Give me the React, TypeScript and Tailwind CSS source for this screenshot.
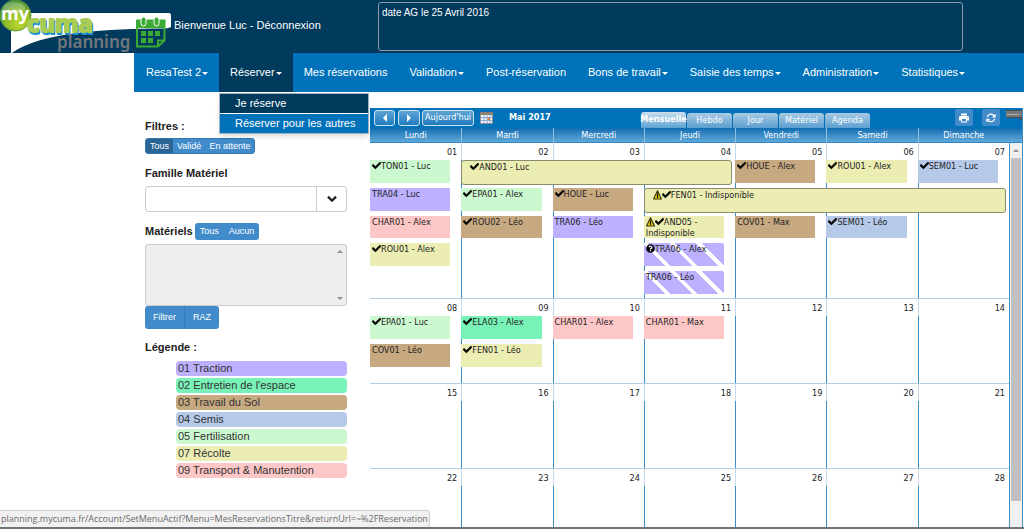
import { clsx } from "clsx";
import { FaCheck, FaQuestionCircle, FaChevronDown } from "react-icons/fa";
import { FaArrowsRotate } from "react-icons/fa6";
import { MdPrint } from "react-icons/md";

type Kind = "traction" | "entretien" | "sol" | "semis" | "fertilisation" | "recolte" | "transport";

type Booking = {
  label: string;
  kind: Kind;
  col: number;
  row: number;
  span?: number;
  checked?: boolean;
  warning?: boolean;
  pending?: boolean;
  question?: boolean;
};

type Week = {
  days: string[];
  className: string;
  bookings: Booking[];
};

const kindColors: Record<Kind, string> = {
  traction: "bg-[#bcb0ff]",
  entretien: "bg-[#79f2b7]",
  sol: "bg-[#c7a981]",
  semis: "bg-[#b6c9e9]",
  fertilisation: "bg-[#ccf8d0]",
  recolte: "bg-[#ebedb3]",
  transport: "bg-[#fec7c7]",
};

const colStarts = ["", "col-start-1", "col-start-2", "col-start-3", "col-start-4", "col-start-5", "col-start-6", "col-start-7"];
const rowStarts = ["", "row-start-2", "row-start-3", "row-start-4", "row-start-5", "row-start-6"];
const colSpans = ["", "", "", "col-span-3", "col-span-4"];

const menu = [
  { label: "ResaTest 2", caret: true },
  { label: "Réserver", caret: true, open: true },
  { label: "Mes réservations" },
  { label: "Validation", caret: true },
  { label: "Post-réservation" },
  { label: "Bons de travail", caret: true },
  { label: "Saisie des temps", caret: true },
  { label: "Administration", caret: true },
  { label: "Statistiques", caret: true },
];

const legend: { label: string; kind: Kind }[] = [
  { label: "01 Traction", kind: "traction" },
  { label: "02 Entretien de l'espace", kind: "entretien" },
  { label: "03 Travail du Sol", kind: "sol" },
  { label: "04 Semis", kind: "semis" },
  { label: "05 Fertilisation", kind: "fertilisation" },
  { label: "07 Récolte", kind: "recolte" },
  { label: "09 Transport & Manutention", kind: "transport" },
];

const weekdays = ["Lundi", "Mardi", "Mercredi", "Jeudi", "Vendredi", "Samedi", "Dimanche"];
const views = ["Mensuelle", "Hebdo", "Jour", "Matériel", "Agenda"];

const weeks: Week[] = [
  {
    days: ["01", "02", "03", "04", "05", "06", "07"],
    className: "h-[156px] grid-rows-[17px_repeat(5,minmax(0,1fr))]",
    bookings: [
      { label: "TON01 - Luc", kind: "fertilisation", col: 1, row: 1, checked: true },
      { label: "TRA04 - Luc", kind: "traction", col: 1, row: 2 },
      { label: "CHAR01 - Alex", kind: "transport", col: 1, row: 3 },
      { label: "ROU01 - Alex", kind: "recolte", col: 1, row: 4, checked: true },
      { label: "AND01 - Luc", kind: "recolte", col: 2, row: 1, span: 3, checked: true },
      { label: "EPA01 - Alex", kind: "fertilisation", col: 2, row: 2, checked: true },
      { label: "ROU02 - Léo", kind: "sol", col: 2, row: 3, checked: true },
      { label: "HOUE - Luc", kind: "sol", col: 3, row: 2, checked: true },
      { label: "TRA06 - Léo", kind: "traction", col: 3, row: 3 },
      { label: "FEN01 - Indisponible", kind: "recolte", col: 4, row: 2, span: 4, checked: true, warning: true },
      { label: "AND05 - Indisponible", kind: "recolte", col: 4, row: 3, checked: true, warning: true },
      { label: "TRA06 - Alex", kind: "traction", col: 4, row: 4, pending: true, question: true },
      { label: "TRA06 - Léo", kind: "traction", col: 4, row: 5, pending: true },
      { label: "HOUE - Alex", kind: "sol", col: 5, row: 1, checked: true },
      { label: "COV01 - Max", kind: "sol", col: 5, row: 3 },
      { label: "ROU01 - Alex", kind: "recolte", col: 6, row: 1, checked: true },
      { label: "SEM01 - Léo", kind: "semis", col: 6, row: 3, checked: true },
      { label: "SEM01 - Luc", kind: "semis", col: 7, row: 1, checked: true },
    ],
  },
  {
    days: ["08", "09", "10", "11", "12", "13", "14"],
    className: "h-[85px] grid-rows-[17px_28px_28px_minmax(0,1fr)]",
    bookings: [
      { label: "EPA01 - Luc", kind: "fertilisation", col: 1, row: 1, checked: true },
      { label: "COV01 - Léo", kind: "sol", col: 1, row: 2 },
      { label: "ELA03 - Alex", kind: "entretien", col: 2, row: 1, checked: true },
      { label: "FEN01 - Léo", kind: "recolte", col: 2, row: 2, checked: true },
      { label: "CHAR01 - Alex", kind: "transport", col: 3, row: 1 },
      { label: "CHAR01 - Max", kind: "transport", col: 4, row: 1 },
    ],
  },
  {
    days: ["15", "16", "17", "18", "19", "20", "21"],
    className: "h-[85px]",
    bookings: [],
  },
  {
    days: ["22", "23", "24", "25", "26", "27", "28"],
    className: "h-[85px]",
    bookings: [],
  },
];

function Logo() {
  return (
    <svg className="h-[53px] w-[172px] shrink-0" viewBox="0 0 172 53" aria-label="my cuma planning" role="img">
      <defs>
        <radialGradient id="ball" cx="0.6" cy="0.75" r="0.75">
          <stop offset="0" stopColor="#c3d92e" />
          <stop offset="0.55" stopColor="#8fbb2c" />
          <stop offset="1" stopColor="#3d8a3a" />
        </radialGradient>
      </defs>
      <path d="M11 13H169Q171 13 171 16V27Q168 28.500 164 28.500C110 28.500 40 32 12 53H11Z" fill="#fff" />
      <circle cx="15.500" cy="15.500" r="15.500" fill="url(#ball)" stroke="#5b9a3e" />
      <ellipse cx="14" cy="8" rx="11" ry="6" fill="#fff" opacity="0.25" />
      <text x="1" y="20" fontFamily="Open Sans, sans-serif" fontWeight="700" fontSize="18" fill="#fff">my</text>
      <text
        x="27"
        y="32"
        className="drop-shadow-[1px_2px_0_#1f8fd0]"
        fontFamily="Noto Sans, sans-serif"
        fontWeight="700"
        fontSize="24"
        fill="#a9cd54"
        stroke="#a9cd54"
        strokeWidth="2"
        strokeLinejoin="round"
      >
        cuma
      </text>
      <text x="57" y="48" fontFamily="Noto Sans, sans-serif" fontWeight="600" fontSize="17" fill="#73777c">planning</text>
      <g fill="none" stroke="#3aaa35" strokeWidth="2">
        <path d="M137 20.500H164.500V40.500L158 46.500H137Z" />
        <path d="M158 46V40.500H164" />
      </g>
      <path d="M136 20H165V28H136Z" fill="#3aaa35" />
      <g fill="#3aaa35" stroke="#fff" strokeWidth="1">
        <rect x="141" y="17" width="5" height="9" rx="2.500" />
        <rect x="154" y="17" width="5" height="9" rx="2.500" />
      </g>
      <g fill="#3aaa35">
        <rect x="141" y="31" width="5" height="5" />
        <rect x="148" y="31" width="5" height="5" />
        <rect x="155" y="31" width="5" height="5" />
        <rect x="141" y="38" width="5" height="5" />
        <rect x="148" y="38" width="5" height="5" />
      </g>
    </svg>
  );
}

function Caret() {
  return <span className="mt-px ml-px border-x-3 border-t-3 border-x-transparent border-t-white" />;
}

function WarningIcon() {
  return (
    <svg className="inline h-[10px] w-[9px] align-top" viewBox="0 0 9 10">
      <path d="M4.500 0.800L8.400 9H0.600Z" fill="#f0d800" stroke="#3a3510" strokeWidth="1.200" strokeLinejoin="round" />
      <path d="M4.500 3.500V8" stroke="#111" strokeWidth="1.300" />
    </svg>
  );
}

function BookingCard({ booking }: { booking: Booking }) {
  const { label, kind, col, row, span, checked, warning, pending, question } = booking;
  return (
    <div
      className={clsx(
        "z-10 overflow-hidden pt-px text-[9px] leading-[11px]",
        kindColors[kind],
        colStarts[col],
        rowStarts[row],
        span ? "mr-[3px] mb-[3px] rounded-[3px] border border-[#8b8c6c] pl-2" : "mr-[11px] mb-[5px] pl-[2px]",
        span && colSpans[span],
        pending &&
          "bg-[repeating-linear-gradient(45deg,#bcb0ff_0px,#bcb0ff_15px,#ffffff_15px,#ffffff_19px)]"
      )}
    >
      {warning && <WarningIcon />}
      {checked && <FaCheck className="inline size-[9px] stroke-[30px] align-top text-black" />}
      {question && <FaQuestionCircle className="inline size-[9px] align-top text-black" />}
      {label}
    </div>
  );
}

function WeekRow({ week }: { week: Week }) {
  return (
    <div className={clsx("grid shrink-0 grid-cols-7", week.className)}>
      {week.days.map((day, i) => (
        <div key={day} className={clsx("row-start-1 -row-end-1 flex flex-col border-b border-[#b5cde0]", colStarts[i + 1])}>
          <div className={clsx("h-[17px] shrink-0 pt-[3px] pr-1 text-right text-[9px] leading-[12px]", i > 0 && "border-l border-[#c5d9e8]")}>
            {day}
          </div>
          <div className={clsx("grow", i > 0 && "border-l border-[#3b8fc6]")} />
        </div>
      ))}
      {week.bookings.map((b) => (
        <BookingCard key={`${b.col}-${b.row}`} booking={b} />
      ))}
    </div>
  );
}

function Header() {
  return (
    <header className="flex h-[53px] bg-[#003a5d] text-white">
      <Logo />
      <div className="flex h-[50px] w-[206px] shrink-0 items-center pl-[2px] whitespace-pre">
        Bienvenue Luc - <a href="#deconnexion">Déconnexion</a>
      </div>
      <textarea
        aria-label="Message"
        readOnly
        defaultValue="date AG le 25 Avril 2016"
        className="mt-[2px] mr-[61px] h-[49px] grow resize-none rounded-[3px] border border-[#8c9caa] px-[3px] py-[3px] text-[10px] leading-[14px]"
      />
    </header>
  );
}

function Menu() {
  return (
    <nav className="ml-[134px] flex h-[39px] bg-[#0072b9] pl-px text-white">
      {menu.map((item) => (
        <div key={item.label} className="relative">
          <a
            href="#menu"
            className={clsx("flex h-full items-center px-[11px] whitespace-nowrap", item.open && "bg-[#003a5d]")}
          >
            {item.label}
            {item.caret && <Caret />}
          </a>
          {item.open && (
            <ul className="absolute top-10 left-0 z-20 w-[150px] border border-[#9db5c6] bg-white whitespace-nowrap shadow-md">
              <li>
                <a href="#je-reserve" className="block bg-[#003a5d] pl-[15px] leading-[19px]">Je réserve</a>
              </li>
              <li className="mt-px">
                <a href="#reserver-autres" className="block bg-[#0072b9] pl-[15px] leading-[19px]">Réserver pour les autres</a>
              </li>
            </ul>
          )}
        </div>
      ))}
    </nav>
  );
}

function Sidebar() {
  return (
    <aside className="w-[202px] shrink-0 pt-[26px]">
      <h2 className="leading-4 font-bold">Filtres :</h2>
      <div className="mt-1 inline-flex overflow-hidden rounded-[3px] border border-[#3276b1] bg-[#428bca] text-[9px] leading-[14px] text-white">
        <button className="bg-[#2a6596] px-1">Tous</button>
        <button className="px-1">Validé</button>
        <button className="px-1">En attente</button>
      </div>

      <label htmlFor="famille" className="mt-[11px] block leading-4 font-bold">Famille Matériel</label>
      <div className="relative mt-[5px] h-[26px]">
        <select id="famille" className="size-full appearance-none rounded-[3px] border border-[#cccccc] bg-white px-2">
          <option></option>
        </select>
        <div className="pointer-events-none absolute inset-y-0 right-0 flex w-[31px] items-center justify-center border-l border-[#cccccc]">
          <FaChevronDown className="size-[10px] stroke-[50px]" />
        </div>
      </div>

      <div className="mt-[11px] flex items-center gap-[2px]">
        <label htmlFor="materiels" className="font-bold">Matériels</label>
        <div className="flex rounded-[3px] bg-[#428bca] text-[9px] leading-[17px] text-white">
          <button className="px-[5px]">Tous</button>
          <button className="px-[5px]">Aucun</button>
        </div>
      </div>
      <div className="relative mt-1 h-[62px]">
        <select id="materiels" multiple className="size-full overflow-hidden rounded-[3px] border border-[#cccccc] bg-[#eeeeee]" />
        <div className="pointer-events-none absolute inset-y-[6px] right-1 flex flex-col justify-between">
          <span className="border-x-3 border-b-3 border-x-transparent border-b-[#909090]" />
          <span className="border-x-3 border-t-3 border-x-transparent border-t-[#909090]" />
        </div>
      </div>
      <div className="flex w-fit overflow-hidden rounded-[3px] bg-[#428bca] text-[9px] leading-[23px] text-white">
        <button className="border-r border-[#357ebd] px-2">Filtrer</button>
        <button className="px-2">RAZ</button>
      </div>

      <h2 className="mt-[10px] leading-4 font-bold">Légende :</h2>
      <ul className="mt-[6px] ml-[31px] flex flex-col gap-[2px] text-[#333333]">
        {legend.map((item) => (
          <li key={item.kind} className={clsx("rounded-[4px] pl-[2px] leading-[15px]", kindColors[item.kind])}>
            {item.label}
          </li>
        ))}
      </ul>
    </aside>
  );
}

function Toolbar() {
  const navButton = "flex h-4 items-center justify-center rounded-[3px] border border-[#cfe2f1] bg-linear-to-b from-[#5fa5d5] to-[#1c7cc0]";
  return (
    <div className="flex h-5 items-start bg-[#0072b9] text-white">
      <div className="flex w-[271px] shrink-0 items-center pt-[2px] pl-1">
        <button aria-label="Précédent" className={clsx(navButton, "w-[21px]")}>
          <span className="border-y-4 border-r-4 border-y-transparent border-r-white" />
        </button>
        <button aria-label="Suivant" className={clsx(navButton, "ml-[3px] w-[22px]")}>
          <span className="border-y-4 border-l-4 border-y-transparent border-l-white" />
        </button>
        <button className={clsx(navButton, "ml-[2px] px-[2px]")}>Aujourd'hui</button>
        <svg className="ml-[6px] h-3 w-[13px]" viewBox="0 0 13 12">
          <path d="M0.500 0.500H12.500V11.500H0.500Z" fill="#f4f6fa" stroke="#8a8f98" />
          <path d="M0 0H13V3H0Z" fill="#8c8175" />
          <path d="M1 5.500H12M1 8.500H12M4 3V11M7 3V11M10 3V11" stroke="#7ba0d0" strokeWidth="0.800" />
          <path d="M7.500 6H10V8H7.500Z" fill="#e07b39" />
        </svg>
        <span className="ml-4 font-bold">Mai 2017</span>
      </div>
      <div className="flex gap-px self-end">
        {views.map((view, i) => (
          <button
            key={view}
            className={clsx(
              "w-[45px] self-end rounded-t-[3px] text-center",
              i === 0
                ? "flex h-4 items-center justify-center bg-linear-to-b from-[#cddfed] to-[#5ba3d3] font-bold whitespace-nowrap"
                : "h-[15px] bg-linear-to-b from-[#a9cae3] to-[#5a9fd0]"
            )}
          >
            {view}
          </button>
        ))}
      </div>
      <div className="ml-auto flex items-start pt-px">
        <button aria-label="Imprimer" className="mr-[9px] flex h-[17px] w-[18px] items-center justify-center rounded-[2px] bg-[#428bca]">
          <MdPrint className="size-3" />
        </button>
        <button aria-label="Actualiser" className="mr-[6px] flex h-[17px] w-[18px] items-center justify-center rounded-[2px] bg-[#428bca]">
          <FaArrowsRotate className="size-[10px]" />
        </button>
        <svg className="mt-px h-[11px] w-4" viewBox="0 0 16 11">
          <path d="M0 0H16V10H14V8H0Z" fill="#4c4f52" />
          <path d="M0 1H16V7H0Z" fill="#74787b" />
          <path d="M1 4.500H13" stroke="#aeb2b5" />
        </svg>
      </div>
    </div>
  );
}

function Planning() {
  return (
    <main className="mt-4 mr-px ml-[23px] flex min-w-0 grow flex-col border-r border-[#3b8fc6] font-['DejaVu_Sans_Condensed','DejaVu_Sans',sans-serif] text-[9px]">
      <Toolbar />
      <div className="grid h-[15px] shrink-0 grid-cols-7 border-b border-[#2f86c2] bg-linear-to-b from-[#0a6db2] to-[#5fa9d8] pr-[13px] text-center leading-[15px] text-white">
        {weekdays.map((day, i) => (
          <div key={day} className={clsx(i > 0 && "border-l border-[#8fc0e2]")}>
            {day}
          </div>
        ))}
      </div>
      <div className="flex min-h-0 grow">
        <div className="flex h-[384px] grow flex-col overflow-hidden border-r border-[#3b8fc6]">
          {weeks.map((week) => (
            <WeekRow key={week.days[0]} week={week} />
          ))}
        </div>
        <div className="flex w-3 shrink-0 flex-col items-center bg-[#f1f1f1]">
          <span className="my-[6px] border-x-3 border-b-3 border-x-transparent border-b-[#909090]" />
          <div className="mb-[26px] w-[10px] grow bg-[#c1c1c1]" />
        </div>
      </div>
    </main>
  );
}

export default function App() {
  return (
    <div className="flex min-h-screen flex-col border-b-2 border-[#6f7377] bg-white font-['Liberation_Sans',Arial,sans-serif] text-[11px] text-[#222222]">
      <Header />
      <Menu />
      <div className="flex grow pl-[145px]">
        <Sidebar />
        <Planning />
      </div>
      <div className="fixed bottom-[2px] left-0 z-30 rounded-tr-[3px] border-t border-r border-[#d0d0d0] bg-[#f1f1f1] pr-px pl-px font-['Open_Sans',sans-serif] text-[9px] leading-4 text-[#6b6b6b]">
        planning.mycuma.fr/Account/SetMenuActif?Menu=MesReservationsTitre&amp;returnUrl=~%2FReservation
      </div>
    </div>
  );
}
